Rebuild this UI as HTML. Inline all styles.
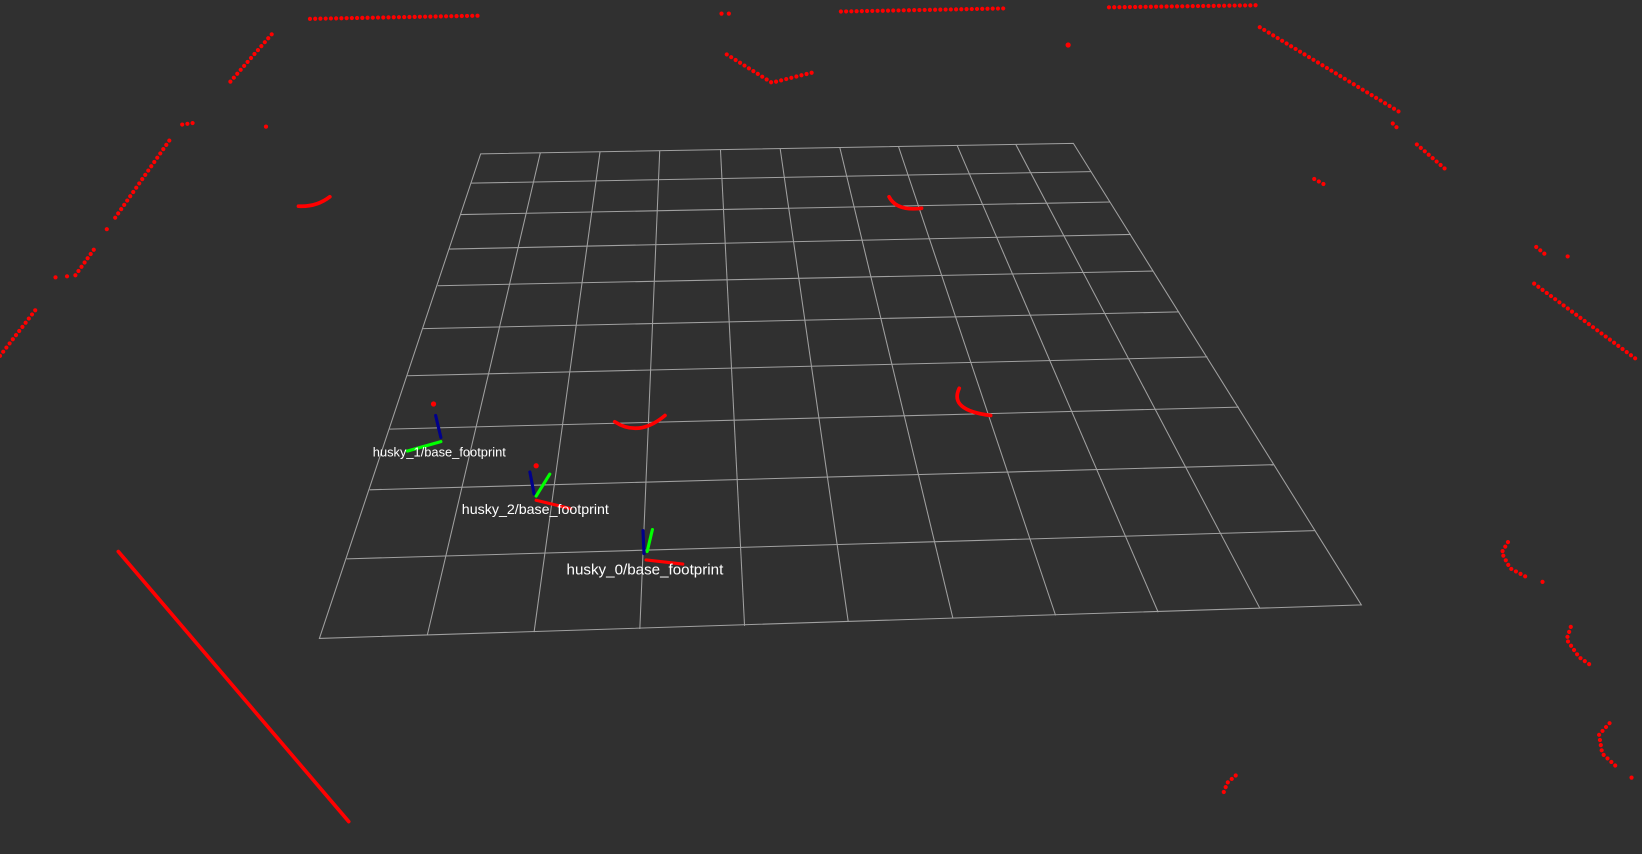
<!DOCTYPE html>
<html><head><meta charset="utf-8"><style>
html,body{margin:0;padding:0;background:#303030;overflow:hidden}
svg{display:block}
text{font-family:"Liberation Sans",sans-serif;fill:#fff;font-size:14px}
</style></head><body>
<svg width="1642" height="854" viewBox="0 0 1568 816" preserveAspectRatio="none">
<rect width="1568" height="816" fill="#303030"/>
<g stroke="#a0a0a0" stroke-width="1" fill="none">
<polygon points="459,147 1025,137 1300,578 305,610"/>
<line x1="516" y1="146" x2="408" y2="607"/>
<line x1="573" y1="145" x2="510" y2="604"/>
<line x1="630" y1="144" x2="611" y2="601"/>
<line x1="688" y1="143" x2="711" y2="598"/>
<line x1="745" y1="142" x2="810" y2="594"/>
<line x1="802" y1="141" x2="910" y2="591"/>
<line x1="858" y1="140" x2="1008" y2="588"/>
<line x1="914" y1="139" x2="1106" y2="585"/>
<line x1="970" y1="138" x2="1203" y2="581"/>
<line x1="450" y1="175" x2="1042" y2="164"/>
<line x1="440" y1="205" x2="1060" y2="193"/>
<line x1="429" y1="238" x2="1080" y2="224"/>
<line x1="418" y1="273" x2="1101" y2="259"/>
<line x1="404" y1="314" x2="1126" y2="298"/>
<line x1="389" y1="359" x2="1153" y2="341"/>
<line x1="372" y1="410" x2="1183" y2="389"/>
<line x1="353" y1="468" x2="1216" y2="444"/>
<line x1="331" y1="534" x2="1256" y2="507"/>
</g>
<g stroke="#f00" stroke-width="4" stroke-linecap="round" fill="none" stroke-dasharray="0 5">
<polyline points="296,18 457,15"/>
<polyline points="220,78 261,31"/>
<polyline points="110,208 164,131"/>
<polyline points="72,263 90,238"/>
<polyline points="0,340 34,296"/>
<polyline points="803,11 962,8"/>
<polyline points="1059,7 1202,5"/>
<polyline points="1203,26 1338,108"/>
<polyline points="1353,138 1383,164"/>
<polyline points="1465,271 1565,345"/>
<polyline points="694,52 737,79 777,69"/>
<polyline points="1440,518 1434,528 1442,543 1457,551"/>
<polyline points="1500,599 1496,611 1508,628 1521,637"/>
<polyline points="1537,691 1527,702 1530,720 1543,732"/>
<polyline points="1180,741 1172,748 1167,761"/>
<polyline points="174,119 188,117"/>
<polyline points="1467,236 1478,245"/>
<polyline points="1330,118 1336,124"/>
<polyline points="1255,171 1266,177"/>
</g>
<g fill="#f00">
<circle cx="689" cy="13" r="2"/><circle cx="696" cy="13" r="2"/>
<circle cx="1020" cy="43" r="2.5"/><circle cx="254" cy="121" r="2"/>
<circle cx="102" cy="219" r="2"/><circle cx="53" cy="265" r="2"/><circle cx="64" cy="264" r="2"/>
<circle cx="1497" cy="245" r="2"/><circle cx="1473" cy="556" r="2"/><circle cx="1558" cy="743" r="2"/>
</g>
<g stroke="#f00" stroke-width="3.5" fill="none" stroke-linecap="round">
<path d="M285,197 Q302,198 315,188"/>
<path d="M849,188 Q856,202 880,199"/>
<path d="M587,403 Q610,418 635,397"/>
<path d="M916,371 Q906,392 946,397"/>
<line x1="113" y1="527" x2="333" y2="785"/>
</g>
<g stroke-width="3" stroke-linecap="round">
<line x1="416" y1="397" x2="421" y2="418" stroke="#00008b"/>
<line x1="421" y1="422" x2="389" y2="431" stroke="#0f0"/>
<circle cx="414" cy="386" r="2.5" fill="#f00" stroke="none"/>
<line x1="506" y1="451" x2="510" y2="472" stroke="#00008b"/>
<line x1="512" y1="474" x2="525" y2="453" stroke="#0f0"/>
<line x1="512" y1="478" x2="545" y2="486" stroke="#f00"/>
<circle cx="512" cy="445" r="2.5" fill="#f00" stroke="none"/>
<line x1="614" y1="507" x2="615" y2="529" stroke="#00008b"/>
<line x1="618" y1="527" x2="623" y2="506" stroke="#0f0"/>
<line x1="617" y1="535" x2="652" y2="539" stroke="#f00"/>
</g>
<text x="356" y="436" style="font-size:12.3px">husky_1/base_footprint</text>
<text x="441" y="491" style="font-size:13.6px">husky_2/base_footprint</text>
<text x="541" y="549" style="font-size:14.5px">husky_0/base_footprint</text>
</svg>
</body></html>
